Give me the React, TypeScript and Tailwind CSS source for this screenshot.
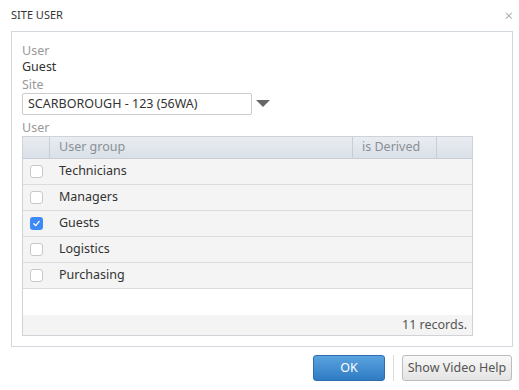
import React from "react";

const rows = [
  { name: "Technicians", checked: false },
  { name: "Managers", checked: false },
  { name: "Guests", checked: true },
  { name: "Logistics", checked: false },
  { name: "Purchasing", checked: false },
];

function Check({ checked }: { checked: boolean }) {
  if (checked) {
    return (
      <div className="w-[13px] h-[13px] rounded-[3px] bg-[#3d8af7] flex items-center justify-center">
        <svg width="9" height="9" viewBox="0 0 10 10">
          <path d="M2 5.2 L4.2 7.4 L8 2.6" stroke="white" strokeWidth="1.4" fill="none" strokeLinecap="round" strokeLinejoin="round" />
        </svg>
      </div>
    );
  }
  return <div className="w-[13px] h-[13px] rounded-[3px] border border-[#c8c8c8] bg-white" />;
}

export default function App() {
  return (
    <div className="w-[519px] h-[390px] bg-white text-[12.5px] text-[#333] flex flex-col" style={{ fontFamily: '"Noto Sans", "Open Sans", sans-serif' }}>
      <div className="h-[31px] flex items-center justify-between pl-[11px] pr-[6px]">
        <span className="text-[11px] text-[#333]">SITE USER</span>
        <span className="text-[15px] text-[#999] leading-none font-light">×</span>
      </div>
      <div className="mx-[11px] mr-[6px] h-[316px] border border-[#d3d7de] pl-[10px] pt-[11px] flex flex-col">
        <div className="text-[#999] leading-[16px]">User</div>
        <div className="text-[#333] leading-[16px]">Guest</div>
        <div className="text-[#999] leading-[16px] mt-[2px]">Site</div>
        <div className="flex items-center mt-[0px]">
          <div className="w-[230px] h-[22px] border border-[#ccc] rounded-[2px] flex items-center px-[5px] text-[#333]">SCARBOROUGH - 123 (56WA)</div>
          <svg className="ml-[4px]" width="14" height="8" viewBox="0 0 14 8">
            <path d="M0 0 H14 L7 7 Z" fill="#666" />
          </svg>
        </div>
        <div className="text-[#999] leading-[16px] mt-[5px]">User</div>
        <div className="w-[451px] h-[200px] border border-[#cfd3d8] flex flex-col">
          <div className="h-[22px] flex bg-gradient-to-b from-[#e9edf2] to-[#d9e0e7] border-b border-[#c9ced6] text-[#8a8f96]">
            <div className="w-[27px] border-r border-[#c9ced6]" />
            <div className="flex-1 border-r border-[#c9ced6] flex items-center pl-[9px]">User group</div>
            <div className="w-[84px] border-r border-[#c9ced6] flex items-center pl-[9px]">is Derived</div>
            <div className="w-[35px]" />
          </div>
          {rows.map((r) => (
            <div key={r.name} className="h-[26px] flex items-center bg-[#f4f4f4] border-b border-[#dcdcdc]">
              <div className="w-[27px] flex justify-center"><Check checked={r.checked} /></div>
              <div className="pl-[9px] text-[#333]">{r.name}</div>
            </div>
          ))}
          <div className="flex-1 bg-white" />
          <div className="h-[20px] bg-[#f4f4f4] flex items-center justify-end pr-[5px] text-[#555]">11 records.</div>
        </div>
      </div>
      <div className="flex items-center justify-end pr-[7px] mt-[8px]">
        <button className="w-[72px] h-[26px] rounded-[3px] border border-[#2d6fae] bg-gradient-to-b from-[#5aa3e0] to-[#2f7cc4] text-white text-[12.5px]">OK</button>
        <div className="w-px h-[26px] bg-[#dcdcdc] mx-[8px]" />
        <button className="w-[110px] h-[26px] rounded-[3px] border border-[#bdbdbd] bg-gradient-to-b from-[#f8f8f8] to-[#e4e4e4] text-[#555] text-[12.5px]">Show Video Help</button>
      </div>
    </div>
  );
}
